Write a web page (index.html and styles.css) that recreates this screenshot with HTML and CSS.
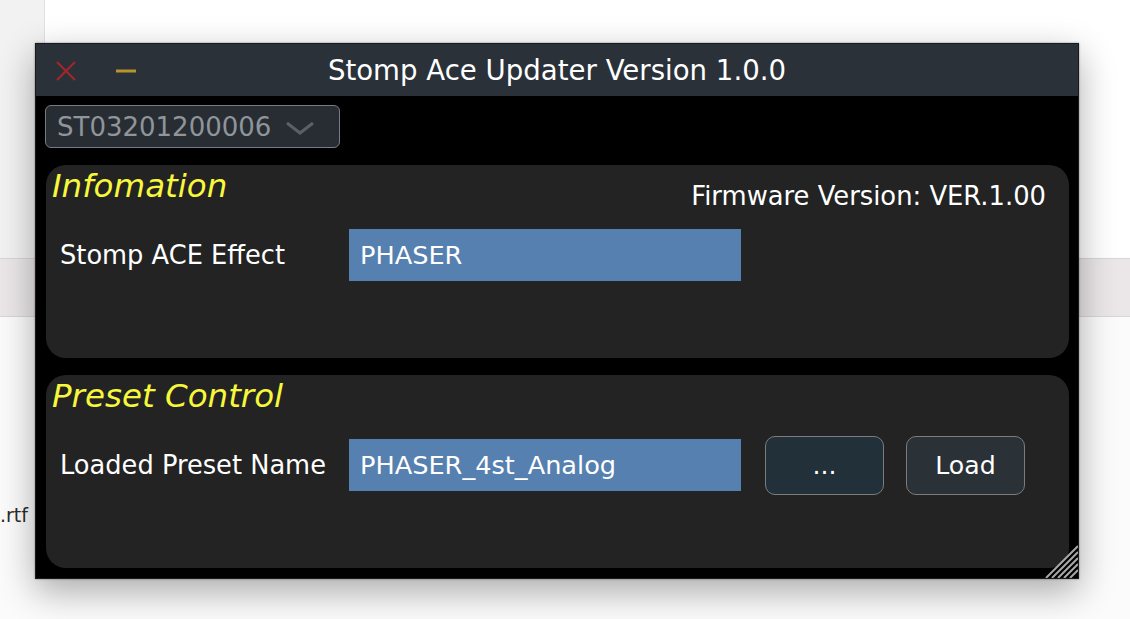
FILE: index.html
```html
<!DOCTYPE html>
<html>
<head>
<meta charset="utf-8">
<link rel="stylesheet" href="styles.css">
</head>
<body>
<div class="desktop">
  <div class="top"><div class="sidebar"></div><div class="list"></div></div>
  <div class="band"></div>
  <div class="rest"><span class="file">.rtf</span></div>
</div>

<div class="window">
  <div class="titlebar">
    <div class="controls">
      <svg class="close" width="22" height="22" viewBox="0 0 22 22"><path d="M2 2 L20 20 M20 2 L2 20" stroke="#a3262a" stroke-width="2.2" fill="none"/></svg>
      <svg class="min" width="22" height="22" viewBox="0 0 22 22"><path d="M1 11 H21" stroke="#b8942a" stroke-width="3" fill="none"/></svg>
    </div>
    <div class="title">Stomp Ace Updater Version 1.0.0</div>
    <div></div>
  </div>
  <div class="content">
    <div class="select">
      <span>ST03201200006</span>
      <svg width="30" height="16" viewBox="0 0 30 16"><path d="M2 3 L15 13 L28 3" stroke="#596067" stroke-width="3" fill="none"/></svg>
    </div>
    <section class="panel">
      <div class="panel-head">
        <h2>Infomation</h2>
        <span class="fw">Firmware Version: VER.1.00</span>
      </div>
      <div class="row">
        <span class="label">Stomp ACE Effect</span>
        <div class="field">PHASER</div>
      </div>
    </section>
    <section class="panel">
      <div class="panel-head">
        <h2>Preset Control</h2>
      </div>
      <div class="row">
        <span class="label">Loaded Preset Name</span>
        <div class="field">PHASER_4st_Analog</div>
        <button class="btn browse">...</button>
        <button class="btn load">Load</button>
      </div>
    </section>
  </div>
  <svg class="grip" width="36" height="36" viewBox="0 0 36 36">
    <path d="M28 36 L36 28 M22 36 L36 22 M16 36 L36 16 M10 36 L36 10 M4 36 L36 4" stroke="#a8a8a8" stroke-width="2" fill="none"/>
  </svg>
</div>
</body>
</html>
```

FILE: styles.css
```css
* { box-sizing: border-box; }
html, body { margin: 0; padding: 0; }
body {
  width: 1130px;
  height: 619px;
  overflow: hidden;
  background: #ffffff;
  font-family: "DejaVu Sans", "Liberation Sans", sans-serif;
  position: relative;
}

.desktop { display: flex; flex-direction: column; height: 619px; }
.top { display: flex; height: 258px; }
.sidebar { width: 45px; background: #f2f2f2; border-right: 1px solid #e2e2e2; }
.list { flex: 1; background: #ffffff; }
.band {
  height: 59px;
  background: #ebe7e8;
  border-top: 1px solid #d9d6d7;
  border-bottom: 1px solid #d9d6d7;
}
.rest { flex: 1; background: #fbfbfb; padding-top: 187px; }
.file { font-size: 19px; color: #2c2c2c; margin-left: 0; }

.window {
  position: absolute;
  left: 35px;
  top: 43px;
  width: 1044px;
  height: 536px;
  background: #000;
  border: 1px solid #1a1a1a;
  box-shadow: 0 12px 34px rgba(0,0,0,0.33), 0 0 2px rgba(0,0,0,0.4);
  display: flex;
  flex-direction: column;
}

.titlebar {
  height: 52px;
  background: #2a3139;
  display: grid;
  grid-template-columns: 1fr auto 1fr;
  align-items: center;
}
.controls { display: flex; align-items: center; gap: 38px; padding-left: 19px; }
.title { color: #ffffff; font-size: 27.6px; line-height: 54px; white-space: nowrap; }

.content { flex: 1; display: flex; flex-direction: column; }

.select {
  margin: 9px 0 0 9px;
  width: 295px;
  height: 43px;
  border: 1.5px solid #767c82;
  border-radius: 6px;
  background: #272d33;
  color: #8f959a;
  font-size: 26px;
  display: flex;
  align-items: center;
  padding-left: 11px;
  gap: 14px;
}
.select svg { margin-top: 2px; }

.panel {
  margin: 17px 9px 0 10px;
  height: 193px;
  background: #232323;
  border-radius: 20px;
}
.panel-head {
  display: flex;
  justify-content: space-between;
  align-items: flex-start;
  height: 40px;
  padding: 0 23px 0 6px;
}
.panel-head h2 {
  margin: 0;
  font-size: 32.5px;
  font-style: italic;
  font-weight: normal;
  line-height: 42px;
  color: #f7f73c;
  white-space: nowrap;
}
.fw {
  color: #ffffff;
  font-size: 25.8px;
  line-height: 40px;
  margin-top: 11px;
  white-space: nowrap;
}

.row {
  display: flex;
  align-items: center;
  height: 52px;
  margin-top: 24px;
  padding-left: 14px;
}
.label {
  width: 289px;
  color: #ffffff;
  font-size: 25.7px;
  white-space: nowrap;
}
.field {
  width: 392px;
  height: 52px;
  line-height: 52px;
  background: #5580b0;
  color: #ffffff;
  font-size: 25.6px;
  padding-left: 11px;
  white-space: nowrap;
}
.btn {
  flex: none;
  width: 119px;
  height: 59px;
  border: 1.5px solid #7c7c7c;
  border-radius: 10px;
  color: #ffffff;
  font-family: "DejaVu Sans", sans-serif;
  font-size: 25.2px;
  padding: 0;
}
.browse { margin-left: 24px; background: #22303a; }
.load { margin-left: 22px; background: #2a3137; }

.grip { position: absolute; right: 0; bottom: 0; }
```
